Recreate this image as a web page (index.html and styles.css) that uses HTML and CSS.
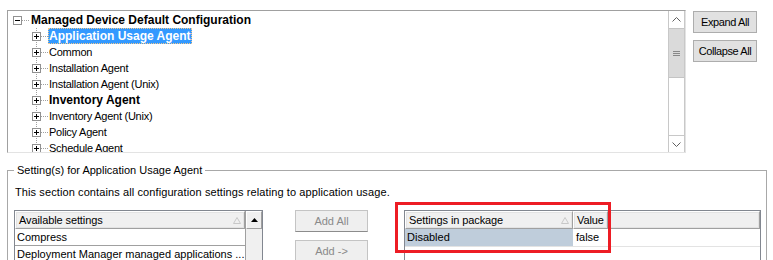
FILE: index.html
```html
<!DOCTYPE html>
<html lang="en">

<head>
    <meta charset="UTF-8">
    <title>Managed Device Default Configuration</title>
    <link rel="stylesheet" href="styles.css">
</head>

<body>
    <svg class="defs" width="0" height="0">
        <symbol id="plus" viewBox="0 0 9 9">
            <rect x=".5" y=".5" width="8" height="8" fill="#fff" stroke="#919191" />
            <path d="M2 4.5h5M4.5 2v5" stroke="#000" />
        </symbol>
        <symbol id="minus" viewBox="0 0 9 9">
            <rect x=".5" y=".5" width="8" height="8" fill="#fff" stroke="#919191" />
            <path d="M2 4.5h5" stroke="#000" />
        </symbol>
        <symbol id="sort" viewBox="0 0 8 7">
            <path d="M.5 6.5L4 .5l3.5 6z" fill="none" stroke="#c8c8c8" />
        </symbol>
    </svg>

    <div class="top">
        <div class="tree">
            <div class="tree-body">
                <div class="node root">
                    <svg class="box"><use href="#minus" /></svg><span class="dots"></span>
                    <span class="label bold">Managed Device Default Configuration</span>
                </div>
                <div class="children">
                    <div class="node"><svg class="box"><use href="#plus" /></svg><span class="dots"></span><span class="label bold sel">Application Usage Agent</span></div>
                    <div class="node"><svg class="box"><use href="#plus" /></svg><span class="dots"></span><span class="label">Common</span></div>
                    <div class="node"><svg class="box"><use href="#plus" /></svg><span class="dots"></span><span class="label">Installation Agent</span></div>
                    <div class="node"><svg class="box"><use href="#plus" /></svg><span class="dots"></span><span class="label">Installation Agent (Unix)</span></div>
                    <div class="node"><svg class="box"><use href="#plus" /></svg><span class="dots"></span><span class="label bold">Inventory Agent</span></div>
                    <div class="node"><svg class="box"><use href="#plus" /></svg><span class="dots"></span><span class="label">Inventory Agent (Unix)</span></div>
                    <div class="node"><svg class="box"><use href="#plus" /></svg><span class="dots"></span><span class="label">Policy Agent</span></div>
                    <div class="node"><svg class="box"><use href="#plus" /></svg><span class="dots"></span><span class="label">Schedule Agent</span></div>
                </div>
            </div>
            <div class="vscroll">
                <div class="sb-btn"><svg width="9" height="5"><path d="M.5 4.5l4-4 4 4" fill="none" stroke="#606060" /></svg></div>
                <div class="sb-thumb"><svg width="7" height="5"><path d="M0 .5h7M0 2.5h7M0 4.5h7" stroke="#888" /></svg></div>
                <div class="sb-track"></div>
                <div class="sb-btn down"><svg width="9" height="5"><path d="M.5 .5l4 4 4-4" fill="none" stroke="#606060" /></svg></div>
            </div>
        </div>
        <div class="side">
            <button class="btn">Expand All</button>
            <button class="btn">Collapse All</button>
        </div>
    </div>

    <fieldset class="group">
        <legend>Setting(s) for Application Usage Agent</legend>
        <p class="desc">This section contains all configuration settings relating to application usage.</p>
        <div class="lists">
            <div class="lv avail">
                <div class="lv-main">
                    <div class="lv-head">
                        <div class="hcell wide">Available settings<svg class="sort"><use href="#sort" /></svg></div>
                    </div>
                    <div class="lv-row">Compress</div>
                    <div class="lv-row">Deployment Manager managed applications ...</div>
                </div>
                <div class="lv-sb">
                    <div class="lv-up"><svg width="7" height="4"><path d="M0 4h7L3.5 0z" fill="#000" /></svg></div>
                    <div class="lv-track"></div>
                </div>
            </div>
            <div class="mid">
                <button class="btn off">Add All</button>
                <button class="btn off">Add -&gt;</button>
            </div>
            <div class="pkg-wrap">
                <div class="lv pkg">
                    <div class="lv-head">
                        <div class="hcell c1">Settings in package<svg class="sort"><use href="#sort" /></svg></div>
                        <div class="hcell c2">Value</div>
                        <div class="hcell c3"></div>
                    </div>
                    <div class="pkg-row">
                        <div class="cell c1 picked">Disabled</div>
                        <div class="cell c2">false</div>
                    </div>
                </div>
                <div class="mark"></div>
            </div>
        </div>
    </fieldset>
</body>

</html>
```

FILE: styles.css
```css
* {
    margin: 0;
    padding: 0;
    box-sizing: border-box;
}

body {
    width: 773px;
    height: 260px;
    overflow: hidden;
    background: #fff;
    font-family: "Liberation Sans", Arial, sans-serif;
    font-size: 11px;
    color: #000;
}

.defs {
    position: absolute;
}

/* tree */
.top {
    display: flex;
    padding: 10px 0 0 7px;
}

.tree {
    width: 679px;
    height: 143px;
    border: 1px solid;
    border-color: #a0a0a0 #e3e3e3 #e3e3e3 #a0a0a0;
    display: flex;
    overflow: hidden;
}

.tree-body {
    flex: 1;
    overflow: hidden;
    padding: 1px 0 0 5px;
}

.node {
    display: flex;
    align-items: center;
    height: 16px;
    white-space: nowrap;
}

.box {
    width: 9px;
    height: 9px;
    flex: none;
}

.dots {
    width: 7px;
    height: 1px;
    background: linear-gradient(to right, #a0a0a0 50%, transparent 50%) 0 0 / 2px 1px repeat-x;
}

.root .dots {
    width: 8px;
}

.label {
    padding: 0;
    line-height: 14px;
    border: 1px solid transparent;
    letter-spacing: -0.25px;
}

.bold {
    font-weight: bold;
    font-size: 12px;
    letter-spacing: 0;
}

.sel {
    background: #3399ff;
    color: #fff;
    border: 1px dotted #f5c88a;
}

.children {
    padding-left: 19px;
    background: linear-gradient(#a0a0a0 50%, transparent 50%) 23px 0 / 1px 2px repeat-y;
}

.vscroll {
    width: 17px;
    display: flex;
    flex-direction: column;
    border-left: 1px solid #c8c8c8;
    border-right: 1px solid #c8c8c8;
}

.sb-btn {
    height: 17px;
    flex: none;
    display: flex;
    align-items: center;
    justify-content: center;
}

.sb-btn.down {
    border-top: 1px solid #c8c8c8;
}

.sb-thumb {
    height: 50px;
    background: #dadada;
    border-top: 1px solid #c4c4c4;
    border-bottom: 1px solid #c4c4c4;
    display: flex;
    align-items: center;
    justify-content: center;
}

.sb-track {
    flex: 1;
}

.side {
    display: flex;
    flex-direction: column;
    gap: 7px;
    margin: 1px 0 0 7px;
}

.btn {
    width: 64px;
    height: 22px;
    background: #e1e1e1;
    border: 1px solid #adadad;
    font: inherit;
    letter-spacing: -0.4px;
    color: #000;
}

/* settings group */
.group {
    margin: 11px 6px 0 7px;
    border: 1px solid #a8a8a8;
    border-bottom: none;
    padding: 0 5px 0 6px;
    height: 100px;
}

.group legend {
    padding: 0 3px;
    line-height: 13px;
}

.desc {
    margin-top: 9px;
    padding-left: 1px;
    line-height: 13px;
    letter-spacing: 0.1px;
}

.lists {
    display: flex;
    margin-top: 11px;
}

.lv {
    height: 60px;
    border: 1px solid #828790;
    background: #fff;
}

.avail {
    width: 249px;
    display: flex;
}

.lv-main {
    flex: 1;
}

.lv-head {
    display: flex;
    height: 18px;
}

.hcell {
    display: flex;
    align-items: center;
    padding-left: 3px;
    background: #f0f0f0;
    border: 1px solid;
    border-color: #fff #a0a0a0 #a0a0a0 #fff;
    box-shadow: inset 0 0 0 1px #e3e3e3;
    letter-spacing: -0.1px;
}

.hcell.wide {
    flex: 1;
}

.sort {
    width: 8px;
    height: 7px;
    margin: 0 3px 0 auto;
}

.lv-row {
    height: 17px;
    line-height: 17px;
    padding-left: 2px;
    border-bottom: 1px solid #a0a0a0;
    white-space: nowrap;
    overflow: hidden;
}

.lv-sb {
    width: 17px;
    display: flex;
    flex-direction: column;
    border-left: 1px solid #a0a0a0;
    background: #f0f0f0;
}

.lv-up {
    height: 18px;
    display: flex;
    align-items: center;
    justify-content: center;
    background: #f0f0f0;
    border: 1px solid;
    border-color: #fff #a0a0a0 #a0a0a0 #fff;
}

.lv-track {
    flex: 1;
}

.mid {
    display: flex;
    flex-direction: column;
    gap: 8px;
    margin-left: 32px;
}

.mid .btn {
    width: 73px;
    height: 22px;
}

.btn.off {
    background: #efefef;
    border-color: #c4c4c4;
    border-bottom-color: #8c8c8c;
    color: #8a8a8a;
    letter-spacing: 0;
}

.pkg-wrap {
    flex: 1;
    position: relative;
    margin-left: 36px;
}

.pkg-row {
    display: flex;
    height: 18px;
    border-bottom: 1px solid #e3e3e3;
}

.c1 {
    width: 168px;
}

.c2 {
    width: 35px;
}

.c3 {
    flex: 1;
}

.cell {
    line-height: 17px;
    padding-left: 2px;
}

.cell.c2 {
    border-left: 1px solid #fff;
}

.picked {
    background: #bfcddb;
}

.mark {
    position: absolute;
    left: -9px;
    top: -8px;
    width: 216px;
    height: 51px;
    border: 3px solid #ed1c24;
}
```
